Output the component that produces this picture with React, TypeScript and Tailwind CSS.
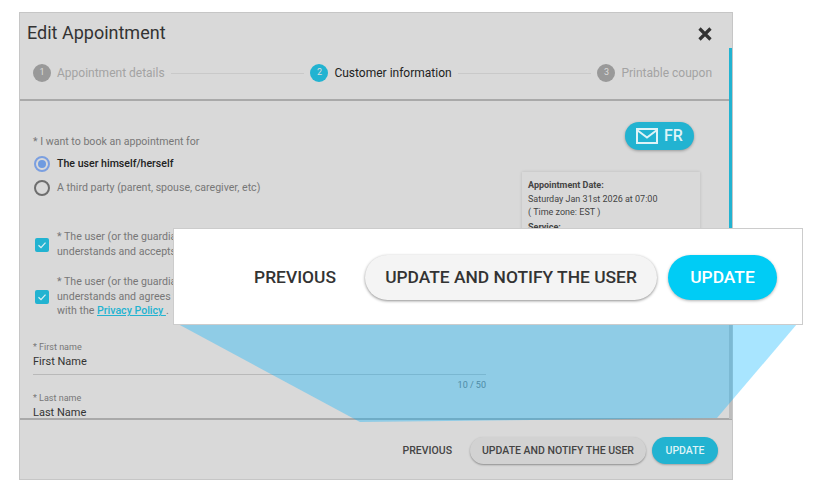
const Step = ({ n, label, active }: { n: number; label: string; active?: boolean }) => (
  <div className="flex items-center gap-[6px]">
    <span
      className={`flex h-[18px] w-[18px] items-center justify-center rounded-full text-[9px] text-[#dddddd] ${
        active ? 'bg-[#22b3d1]' : 'bg-[#999999]'
      }`}
    >
      {n}
    </span>
    <span className={`text-[12px] ${active ? 'text-[#222222]' : 'text-[#a3a3a3]'}`}>{label}</span>
  </div>
);

const Check = () => (
  <span className="flex h-[14px] w-[14px] shrink-0 items-center justify-center rounded-[2px] bg-[#22b3d1]">
    <svg viewBox="0 0 14 14" className="h-[14px] w-[14px]" fill="none" stroke="#d9eef3" strokeWidth="1.3">
      <path d="M3.5 7.2 6 9.6 10.5 4.6" />
    </svg>
  </span>
);

export default function App() {
  return (
    <div className="relative h-[492px] w-[818px] overflow-hidden bg-white pl-[19px] pt-[12px] font-['Roboto',sans-serif]">
      <div className="relative flex h-[468px] w-[714px] flex-col overflow-hidden border border-[#c6c6c6] bg-[#d9d9d9]">
        {/* scrollbar */}
        <div className="absolute right-0 top-[35px] h-[371px] w-[3px] bg-[#bdbdbd]">
          <div className="h-[240px] bg-[#22b3d1]" />
        </div>

        <div className="mr-[3px] shrink-0 border-b-2 border-[#a9a9a9] pb-[17px] pl-[7px] pr-[17px] pt-[8px]">
          <div className="flex items-center justify-between">
            <h1 className="text-[18px] leading-[24px] text-[#333333]">Edit Appointment</h1>
            <svg viewBox="0 0 14 14" className="mt-[2px] h-[14px] w-[14px]" fill="none" stroke="#333333" strokeWidth="3.2">
              <path d="M1.5 1.5 12.5 12.5M12.5 1.5 1.5 12.5" />
            </svg>
          </div>
          <div className="ml-[6px] mt-[19px] flex items-center gap-[6px]">
            <Step n={1} label="Appointment details" />
            <div className="h-px flex-1 bg-[#c9c9c9]" />
            <Step n={2} label="Customer information" active />
            <div className="h-px flex-1 bg-[#c9c9c9]" />
            <Step n={3} label="Printable coupon" />
          </div>
        </div>

        <div className="flex min-h-0 flex-1 overflow-hidden pl-[13px]">
          <div className="w-[453px] shrink-0 pt-[34px]">
            <p className="text-[10.6px] leading-[14px] text-[#777777]">* I want to book an appointment for</p>
            <div className="mt-[3px] flex h-[24px] items-center gap-[7px] text-[10.6px] font-medium text-[#222222]">
              <span className="ml-px flex h-[16px] w-[16px] items-center justify-center rounded-full border-2 border-[#7b9fe0]">
                <span className="h-[8px] w-[8px] rounded-full bg-[#6f9be0]" />
              </span>
              The user himself/herself
            </div>
            <div className="flex h-[24px] items-center gap-[7px] text-[10.6px] text-[#777777]">
              <span className="ml-px h-[16px] w-[16px] rounded-full border-2 border-[#6e6e6e]" />
              A third party (parent, spouse, caregiver, etc)
            </div>

            <div className="mt-[30px] flex items-center gap-[8px] pl-[2px] text-[10.6px] leading-[14.6px] text-[#777777]">
              <Check />
              <p>
                * The user (or the guardian) has read,
                <br />
                understands and accepts the terms
              </p>
            </div>
            <div className="mt-[16px] flex items-center gap-[8px] pl-[2px] text-[10.6px] leading-[14.6px] text-[#777777]">
              <Check />
              <p>
                * The user (or the guardian) has read,
                <br />
                understands and agrees to comply
                <br />
                with the <span className="font-medium text-[#22b3d1] underline">Privacy Policy </span>.
              </p>
            </div>

            <p className="mt-[22px] text-[9px] leading-[12px] text-[#777777]">* First name</p>
            <p className="mt-px border-b border-[#b9b9b9] pb-[4px] text-[11px] leading-[16px] text-[#333333]">
              First Name
            </p>
            <p className="mt-[4px] text-right text-[9px] leading-[12px] text-[#777777]">10 / 50</p>
            <p className="mt-px text-[9px] leading-[12px] text-[#777777]">* Last name</p>
            <p className="mt-px text-[11px] leading-[16px] text-[#333333]">Last Name</p>
          </div>

          <div className="ml-[36px] w-[178px] shrink-0 pt-[21px]">
            <div className="flex justify-end pr-[6px]">
              <button className="flex h-[28px] w-[69px] items-center justify-center gap-[6px] rounded-full bg-[#22b3d1] text-[16px] font-medium text-[#dff3f7] shadow-[0_1px_3px_rgba(0,0,0,0.3)]">
                <svg viewBox="0 0 22 16" className="h-[16px] w-[22px]" fill="none" stroke="#dff3f7" strokeWidth="2">
                  <rect x="1" y="1" width="20" height="14" />
                  <path d="M1 2 11 9.5 21 2" />
                </svg>
                FR
              </button>
            </div>
            <div className="mt-[22px] h-[120px] px-[6px] pt-[7px] text-[9px] leading-[13.5px] text-[#444444] shadow-[0_0_3px_rgba(0,0,0,0.15)]">
              <p className="font-bold">Appointment Date:</p>
              <p>Saturday Jan 31st 2026 at 07:00</p>
              <p>( Time zone: EST )</p>
              <p className="mt-px font-bold">Service:</p>
            </div>
          </div>
        </div>

        <div className="flex h-[61px] shrink-0 items-center justify-end border-t-2 border-[#a9a9a9] pr-[14px] pt-[2px]">
          <span className="mr-[18px] text-[10.5px] font-medium text-[#444444]">PREVIOUS</span>
          <button className="h-[27px] w-[176px] rounded-full bg-[#d2d2d2] text-[10.5px] font-medium text-[#444444] shadow-[0_1px_2px_rgba(0,0,0,0.35)]">
            UPDATE AND NOTIFY THE USER
          </button>
          <button className="ml-[6px] h-[27px] w-[66px] rounded-full bg-[#22b3d1] text-[10.5px] font-medium text-[#dff3f7] shadow-[0_1px_2px_rgba(0,0,0,0.25)]">
            UPDATE
          </button>
        </div>
      </div>

      <svg className="absolute left-0 top-0 h-[492px] w-[818px]" viewBox="0 0 818 492">
        <polygon points="178,324 797,324 717,418 360,422" fill="#00b4ff" fillOpacity="0.34" />
      </svg>

      <div className="absolute left-[173px] top-[228px] flex h-[97px] w-[630px] items-center justify-end border border-[#cccccc] bg-white pr-[25px] pt-px">
        <span className="mr-[29px] text-[17.4px] font-medium text-[#333333]">PREVIOUS</span>
        <button className="h-[45px] w-[292px] rounded-full bg-[#f4f4f4] text-[17.4px] font-medium text-[#333333] shadow-[0_1px_3px_rgba(0,0,0,0.45)]">
          UPDATE AND NOTIFY THE USER
        </button>
        <button className="ml-[11px] h-[45px] w-[109px] rounded-full bg-[#00ccf5] text-[17.4px] font-medium text-white shadow-[0_1px_3px_rgba(0,0,0,0.3)]">
          UPDATE
        </button>
      </div>
    </div>
  );
}
